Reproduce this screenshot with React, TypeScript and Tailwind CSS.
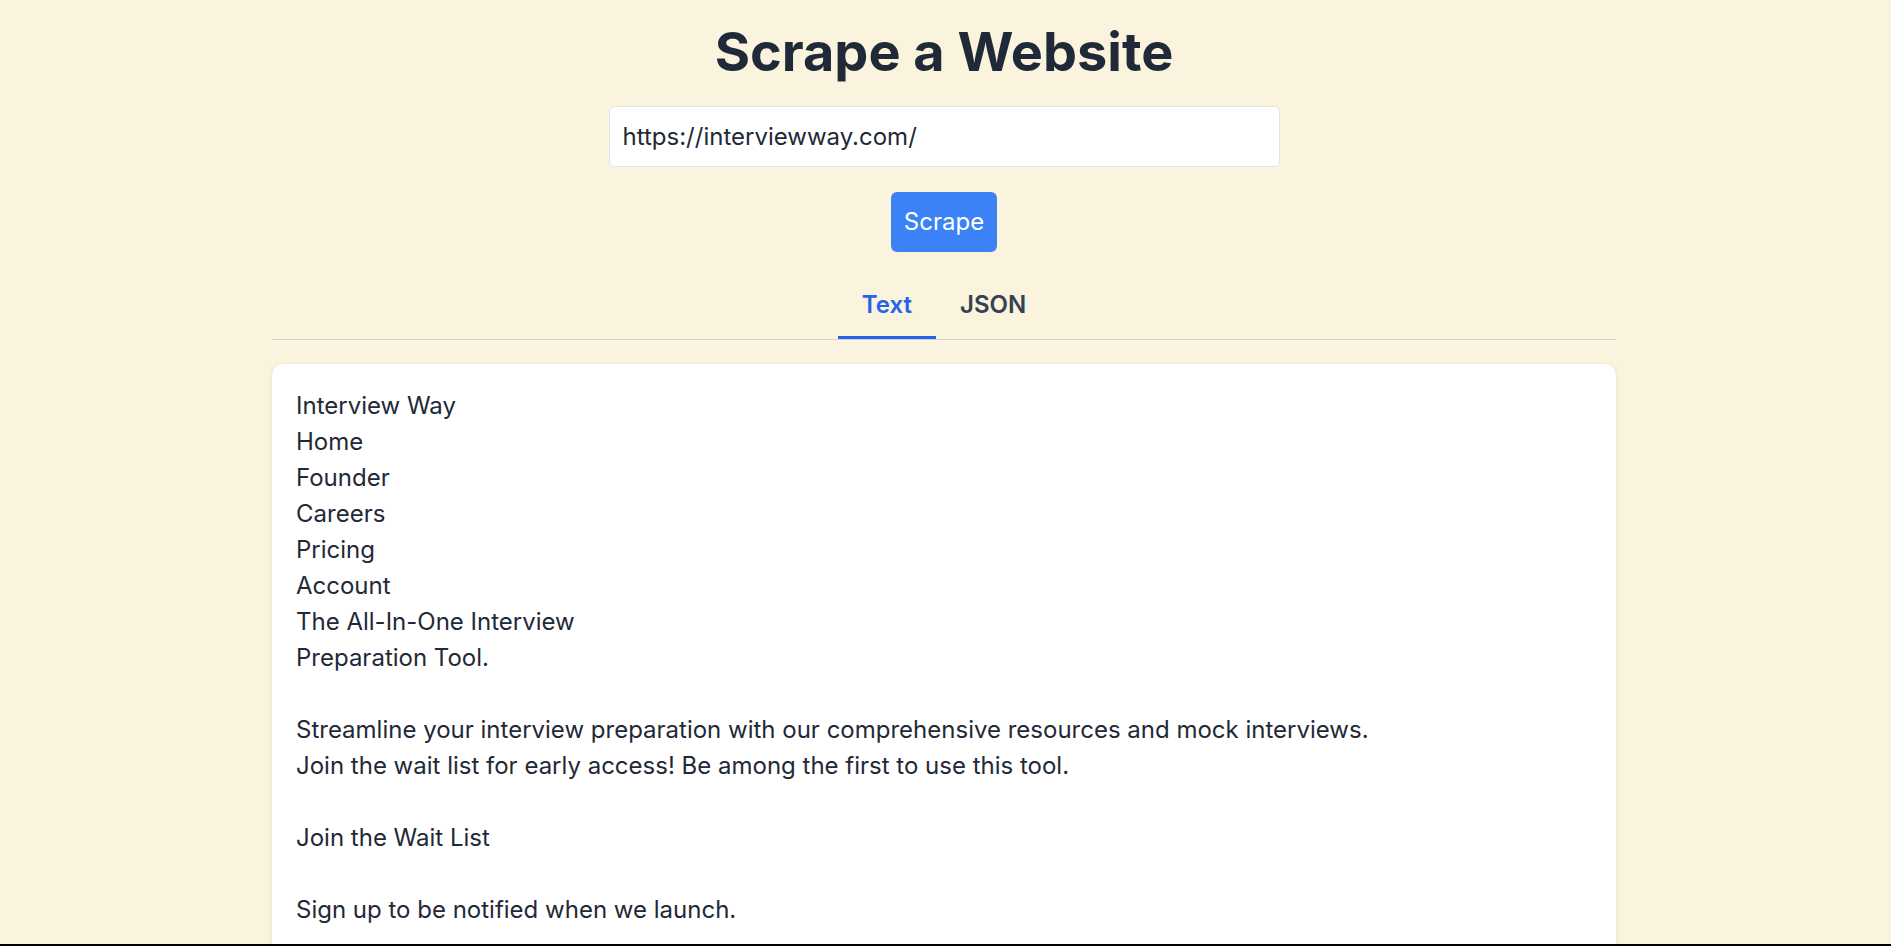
import React, { useState } from "react";

const scrapedText = `Interview Way
Home
Founder
Careers
Pricing
Account
The All-In-One Interview
Preparation Tool.

Streamline your interview preparation with our comprehensive resources and mock interviews.
Join the wait list for early access! Be among the first to use this tool.

Join the Wait List

Sign up to be notified when we launch.`;

export default function App() {
  const [url, setUrl] = useState("https://interviewway.com/");
  const [tab, setTab] = useState<"text" | "json">("text");

  return (
    <div className="h-[946px] flex flex-col bg-[#faf3dd] font-['Inter','Noto_Sans',sans-serif] text-[#1f2937]">
      <div className="flex-1 overflow-hidden flex flex-col items-center pr-[3px] pt-[22px]">
        <h1 className="shrink-0 text-[54px] leading-[60px] font-bold text-[#1f2937]">
          Scrape a Website
        </h1>

        <input
          value={url}
          onChange={(e) => setUrl(e.target.value)}
          className="shrink-0 mt-[24px] h-[61px] w-[671px] rounded-[6px] border border-[#e3e4e8] bg-white px-[13px] text-[24px] text-[#1f2937] outline-none"
        />

        <button className="shrink-0 mt-[25px] h-[60px] px-[13px] rounded-[6px] bg-[#3b82f6] text-white text-[24px] leading-[36px]">
          Scrape
        </button>

        <div className="shrink-0 mt-[23px] w-[1344px] flex justify-center border-b border-[#d6d4cc]">
          <button
            onClick={() => setTab("text")}
            className={`px-[24px] pt-[12px] pb-[13px] text-[24px] leading-[36px] font-semibold border-b-[3px] ${
              tab === "text"
                ? "border-[#2563eb] text-[#2563eb]"
                : "border-transparent text-[#374151]"
            }`}
          >
            Text
          </button>
          <button
            onClick={() => setTab("json")}
            className={`px-[24px] pt-[12px] pb-[13px] text-[24px] leading-[36px] font-semibold border-b-[3px] ${
              tab === "json"
                ? "border-[#2563eb] text-[#2563eb]"
                : "border-transparent text-[#374151]"
            }`}
          >
            JSON
          </button>
        </div>

        <div className="mt-[24px] w-[1344px] shrink-0 rounded-[12px] bg-white p-[24px] pb-[60px] shadow-[0_1px_4px_rgba(120,100,40,0.12)]">
          <div className="whitespace-pre-line text-[24px] leading-[36px] text-[#1f2937]">
            {tab === "text"
              ? scrapedText
              : JSON.stringify({ url, text: scrapedText }, null, 2)}
          </div>
        </div>
      </div>
      <div className="h-[2px] shrink-0 bg-black" />
    </div>
  );
}
